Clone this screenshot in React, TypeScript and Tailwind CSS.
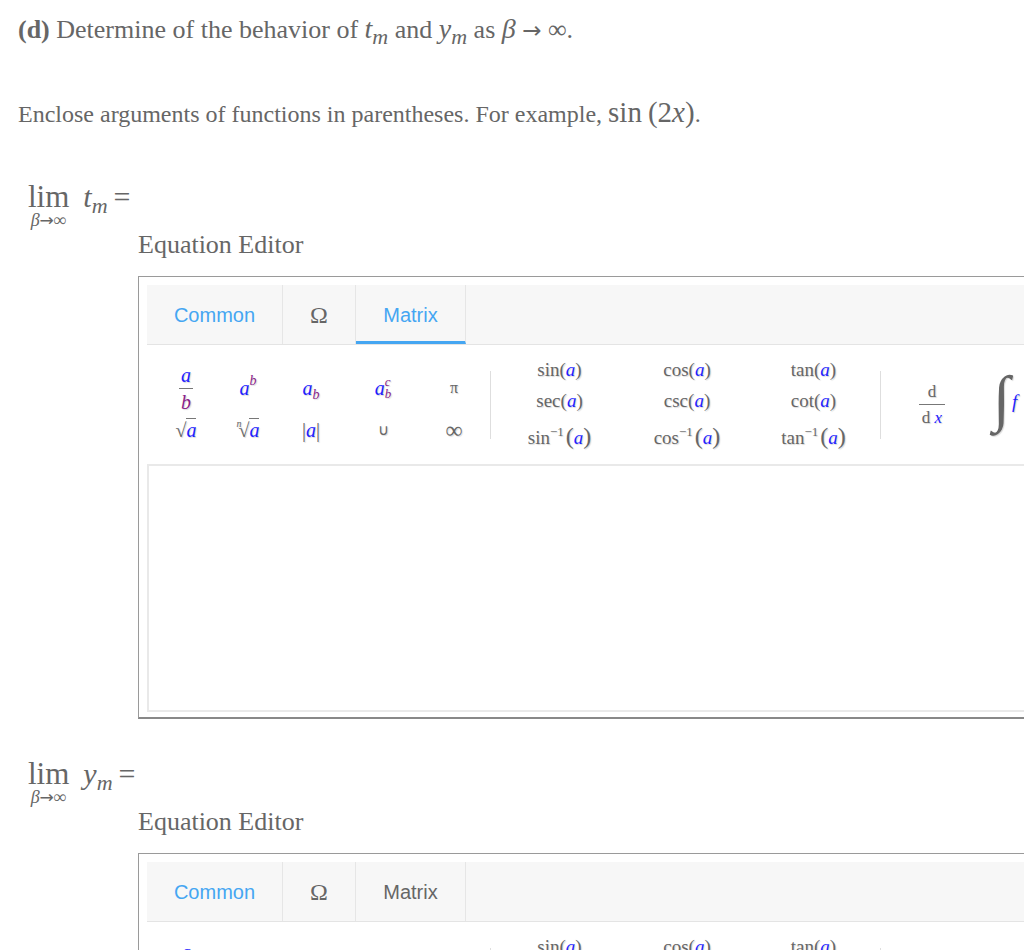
import type { ReactNode } from 'react';

const serif = { fontFamily: '"Liberation Serif", "Times New Roman", serif' };
const sans = { fontFamily: '"Liberation Sans", Arial, sans-serif' };
const arrow = { fontFamily: '"DejaVu Sans", sans-serif' };

const A = () => <span className="italic text-[#1f1fff]">a</span>;
const B = ({ children = 'b' }: { children?: ReactNode }) => (
  <span className="italic text-[#8a1f8a]">{children}</span>
);

const Cell = ({ w, children }: { w: string; children: ReactNode }) => (
  <div className={`${w} flex items-center justify-center`}>{children}</div>
);

const Trig = ({ fn, inv }: { fn: string; inv?: boolean }) => (
  <span className="text-[19px] text-[#666] leading-none whitespace-nowrap">
    {fn}
    {inv && <sup className="text-[13px] -top-[0.6em] mr-[2px]">−1</sup>}
    <span className={inv ? 'text-[24px]' : ''}>(</span>
    <A />
    <span className={inv ? 'text-[24px]' : ''}>)</span>
  </span>
);

const Palette = () => (
  <div className="flex h-[119px] [text-shadow:1px_1px_1px_#d9d9d9]" style={serif}>
    {/* basic symbols */}
    <div className="flex flex-col pt-[18px] pl-[8px]">
      <div className="flex h-[50px] text-[20px]">
        <Cell w="w-[62px]">
          <div className="flex flex-col items-center leading-none">
            <A />
            <div className="h-px w-[14px] bg-[#777] my-[3px]" />
            <B />
          </div>
        </Cell>
        <Cell w="w-[62px]">
          <span className="leading-none">
            <A />
            <sup className="text-[14px] -top-[0.7em]"><B /></sup>
          </span>
        </Cell>
        <Cell w="w-[64px]">
          <span className="leading-none">
            <A />
            <sub className="text-[14px]"><B /></sub>
          </span>
        </Cell>
        <Cell w="w-[80px]">
          <span className="inline-flex items-center leading-none">
            <A />
            <span className="flex flex-col text-[13px] leading-[12px]">
              <B>c</B>
              <B />
            </span>
          </span>
        </Cell>
        <Cell w="w-[62px]">
          <span className="text-[16px] text-[#666]">π</span>
        </Cell>
      </div>
      <div className="flex h-[34px] text-[20px]">
        <Cell w="w-[62px]">
          <span className="leading-none text-[#666]">
            √<span className="border-t border-[#777]"><A /></span>
          </span>
        </Cell>
        <Cell w="w-[62px]">
          <span className="leading-none text-[#666]">
            <sup className="text-[10px] italic -top-[1em] -mr-[3px]">n</sup>√
            <span className="border-t border-[#777]"><A /></span>
          </span>
        </Cell>
        <Cell w="w-[64px]">
          <span className="leading-none text-[#666]">
            |<A />|
          </span>
        </Cell>
        <Cell w="w-[80px]">
          <span className="text-[15px] text-[#666]" style={sans}>∪</span>
        </Cell>
        <Cell w="w-[62px]">
          <span className="text-[24px] text-[#666]">∞</span>
        </Cell>
      </div>
    </div>

    <div className="self-center h-[68px] w-px bg-[#dedede] ml-[5px]" />

    {/* trig */}
    <div className="pt-[9px] pl-[6px] mr-[5px]">
      {[
        ['sin', 'cos', 'tan'],
        ['sec', 'csc', 'cot'],
      ].map((row) => (
        <div key={row[0]} className="flex h-[31px]">
          {row.map((fn, i) => (
            <Cell key={fn} w={['w-[125px]', 'w-[130px]', 'w-[123px]'][i]}>
              <Trig fn={fn} />
            </Cell>
          ))}
        </div>
      ))}
      <div className="flex h-[40px]">
        {['sin', 'cos', 'tan'].map((fn, i) => (
          <Cell key={fn} w={['w-[125px]', 'w-[130px]', 'w-[123px]'][i]}>
            <Trig fn={fn} inv />
          </Cell>
        ))}
      </div>
    </div>

    <div className="self-center h-[68px] w-px bg-[#dedede]" />

    {/* calculus */}
    <div className="flex items-center">
      <Cell w="w-[102px]">
        <div className="flex flex-col items-center text-[17px] text-[#666] leading-none">
          <span>d</span>
          <div className="h-px w-[26px] bg-[#777] my-[4px]" />
          <span>
            d <span className="italic text-[#1f1fff]">x</span>
          </span>
        </div>
      </Cell>
      <div className="flex items-center pl-[10px] -mt-[14px]">
        <span className="italic text-[62px] text-[#666] leading-none">∫</span>
        <span className="italic text-[19px] text-[#1f1fff] ml-[2px] mt-[10px]">f</span>
      </div>
    </div>
  </div>
);

const Editor = ({ hoverMatrix }: { hoverMatrix?: boolean }) => (
  <div className="ml-[138px] w-[1000px] border border-[#9a9a9a] border-b-2 border-b-[#888] px-[8px] pt-[8px] pb-[5px] bg-white">
    <div className="flex h-[60px] bg-[#f7f7f7] border-b border-[#e4e4e4] text-[20px]" style={sans}>
      <div className="w-[136px] flex items-center justify-center border-r border-[#e6e6e6] text-[#45a6f2]">
        Common
      </div>
      <div className="w-[73px] flex items-center justify-center border-r border-[#e6e6e6] text-[#666]" style={serif}>
        <span className="text-[24px]">Ω</span>
      </div>
      <div
        className={`w-[110px] flex items-center justify-center border-r border-[#e6e6e6] ${
          hoverMatrix ? 'text-[#45a6f2] border-b-[3px] border-b-[#45a6f2] pt-[3px]' : 'text-[#666]'
        }`}
      >
        Matrix
      </div>
    </div>
    <Palette />
    <div className="h-[248px] border-2 border-[#e9e9e9]" />
  </div>
);

const Limit = ({ v }: { v: string }) => (
  <div className="flex items-start pl-[28px] text-[#666]" style={serif}>
    <div className="flex flex-col items-center">
      <span className="text-[31px] leading-[28px]">lim</span>
      <span className="italic text-[18px] leading-[18px]">
        β<span style={arrow} className="not-italic text-[17px]">→</span>∞
      </span>
    </div>
    <span className="italic text-[30px] leading-[28px] ml-[14px]">
      {v}
      <sub className="text-[22px]">m</sub>
    </span>
    <span className="text-[30px] leading-[28px] ml-[6px]">=</span>
  </div>
);

export default function App() {
  return (
    <div className="h-screen overflow-hidden bg-white text-[#666]" style={serif}>
      <p className="pl-[18px] pt-[14px] text-[26px] leading-[30px]">
        <b>(d)</b> Determine of the behavior of <i className="text-[28px]">t</i>
        <sub className="italic text-[22px]">m</sub> and <i className="text-[28px]">y</i>
        <sub className="italic text-[22px]">m</sub> as <i className="text-[28px]">β</i>{' '}
        <span style={arrow} className="text-[23px]">→</span> ∞.
      </p>
      <p className="pl-[18px] pt-[52px] text-[24px] leading-[30px]">
        Enclose arguments of functions in parentheses. For example,{' '}
        <span className="text-[29px]">sin</span> <span className="text-[29px]">(2<i>x</i>)</span>.
      </p>

      <div className="pt-[54px]">
        <Limit v="t" />
        <p className="pl-[138px] pt-[1px] text-[26px] leading-[30px]">Equation Editor</p>
        <div className="pt-[16px]">
          <Editor hoverMatrix />
        </div>
      </div>

      <div className="pt-[41px]">
        <Limit v="y" />
        <p className="pl-[138px] pt-[1px] text-[26px] leading-[30px]">Equation Editor</p>
        <div className="pt-[16px]">
          <Editor />
        </div>
      </div>
    </div>
  );
}
